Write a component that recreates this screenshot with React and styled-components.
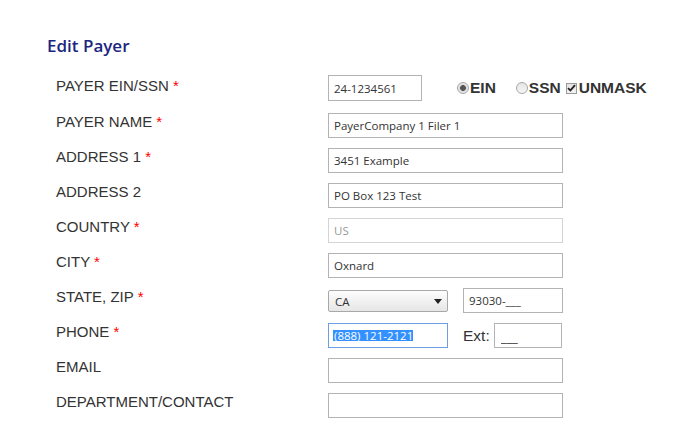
import React from 'react';
import styled, { createGlobalStyle } from 'styled-components';

const GlobalStyle = createGlobalStyle`
  body {
    margin: 0;
    background: #fff;
    font-family: "Liberation Sans", Arial, sans-serif;
  }
`;

// Linhas do formulário
const rows = [
  { label: 'PAYER NAME', req: true, value: 'PayerCompany 1 Filer 1' },
  { label: 'ADDRESS 1', req: true, value: '3451 Example' },
  { label: 'ADDRESS 2', value: 'PO Box 123 Test' },
  { label: 'COUNTRY', req: true, value: 'US', muted: true },
  { label: 'CITY', req: true, value: 'Oxnard' },
];

const Check = () => (
  <svg width="9" height="8" viewBox="0 0 9 8">
    <path d="M1 4.2 L3.4 6.4 L8 1.2" fill="none" stroke="#222" strokeWidth="1.8" />
  </svg>
);

const App = () => {
  return (
    <Page>
      <GlobalStyle />
      <Title>Edit Payer</Title>
      <Form>
        <Row $h={38}>
          <Label $top={2}>PAYER EIN/SSN <Req>*</Req></Label>
          <Controls>
            <Field $w={94} $h={26} readOnly value="24-1234561" />
            <Options>
              <Radio $checked />
              <OptText>EIN</OptText>
              <Radio style={{ marginLeft: 20 }} />
              <OptText>SSN</OptText>
              <Box>
                <Check />
              </Box>
              <OptText>UNMASK</OptText>
            </Options>
          </Controls>
        </Row>

        {rows.map((r) => (
          <Row key={r.label} $h={35}>
            <Label>
              {r.label} {r.req && <Req>*</Req>}
            </Label>
            <Controls>
              <Field $w={235} $muted={r.muted} readOnly value={r.value} />
            </Controls>
          </Row>
        ))}

        <Row $h={35}>
          <Label>STATE, ZIP <Req>*</Req></Label>
          <Controls>
            <Select>
              CA
              <svg width="8" height="5" viewBox="0 0 8 5">
                <path d="M0 0 H8 L4 5 Z" fill="#222" />
              </svg>
            </Select>
            <Field $w={100} readOnly value="93030-___" style={{ marginLeft: 15 }} />
          </Controls>
        </Row>

        <Row $h={35}>
          <Label>PHONE <Req>*</Req></Label>
          <Controls>
            <Focused>
              <Selected>(888) 121-2121</Selected>
            </Focused>
            <ExtLabel>Ext:</ExtLabel>
            <Field $w={68} $big readOnly value="___" />
          </Controls>
        </Row>

        <Row $h={35}>
          <Label>EMAIL</Label>
          <Controls>
            <Field $w={235} readOnly value="" />
          </Controls>
        </Row>

        <Row $h={35}>
          <Label>DEPARTMENT/CONTACT</Label>
          <Controls>
            <Field $w={235} readOnly value="" />
          </Controls>
        </Row>
      </Form>
    </Page>
  );
};

const Page = styled.div`
  padding: 34px 0 0 47px;
  width: 683px;
  height: 433px;
  box-sizing: border-box;
  overflow: hidden;
`;

const Title = styled.h2`
  margin: 0;
  font-family: "Open Sans", sans-serif;
  font-weight: 600;
  font-size: 17px;
  line-height: 24px;
  color: #1c2580;
`;

const Form = styled.div`
  margin-top: 17px;
  padding-left: 9px;
`;

const Row = styled.div`
  display: grid;
  grid-template-columns: 272px 1fr;
  align-items: start;
  height: ${(p) => p.$h}px;
`;

const Label = styled.div`
  font-size: 15px;
  line-height: 18px;
  color: #333;
  padding-top: ${(p) => p.$top || 0}px;
  white-space: nowrap;
`;

const Req = styled.span`
  color: #f00;
`;

const Controls = styled.div`
  display: flex;
  align-items: flex-start;
`;

const Field = styled.input`
  box-sizing: border-box;
  width: ${(p) => p.$w}px;
  height: ${(p) => p.$h || 25}px;
  margin: 0;
  padding: ${(p) => (p.$big ? '3px 6px 0' : '0 5px')};
  border: 1px solid ${(p) => (p.$muted ? '#d4d4d4' : '#b3b3b3')};
  border-radius: 0;
  background: #fff;
  font-family: "Open Sans", sans-serif;
  font-size: ${(p) => (p.$big ? '13px' : '11.5px')};
  color: ${(p) => (p.$muted ? '#999' : '#333')};
  outline: none;
`;

const Options = styled.div`
  display: flex;
  align-items: center;
  height: 26px;
  margin-left: 35px;
`;

const Radio = styled.span`
  box-sizing: border-box;
  width: 12px;
  height: 12px;
  border-radius: 50%;
  border: 1px solid #a8a8a8;
  background: ${(p) =>
    p.$checked
      ? 'radial-gradient(circle, #555 0 2.6px, #ddd 3.2px, #f2f2f2 100%)'
      : 'linear-gradient(#e4e4e4, #f6f6f6)'};
  margin-right: 1px;
`;

const Box = styled.span`
  box-sizing: border-box;
  width: 11px;
  height: 11px;
  margin-left: 5px;
  margin-right: 2px;
  border: 1px solid #9a9a9a;
  background: linear-gradient(#e2e2e2, #f4f4f4);
  display: flex;
  align-items: center;
  justify-content: center;
`;

const OptText = styled.span`
  font-weight: bold;
  font-size: 15.5px;
  color: #333;
  line-height: 18px;
`;

const Select = styled.div`
  box-sizing: border-box;
  width: 120px;
  height: 22px;
  margin-top: 2px;
  padding: 0 5px 0 6px;
  border: 1px solid #a8a8a8;
  border-radius: 2px;
  background: linear-gradient(#fdfdfd, #e6e6e6);
  display: flex;
  align-items: center;
  justify-content: space-between;
  font-family: "Open Sans", sans-serif;
  font-size: 11.5px;
  color: #333;
`;

const Focused = styled.div`
  box-sizing: border-box;
  width: 120px;
  height: 25px;
  border: 1px solid #6d9ee2;
  padding: 0 4px;
  display: flex;
  align-items: center;
  font-family: "Open Sans", sans-serif;
  font-size: 11.5px;
`;

const Selected = styled.span`
  background: #3390ff;
  color: #fff;
  line-height: 11px;
  padding: 0 0 0 1px;
`;

const ExtLabel = styled.span`
  font-size: 15.5px;
  line-height: 25px;
  color: #333;
  margin: 0 4px 0 15px;
`;

export default App;
